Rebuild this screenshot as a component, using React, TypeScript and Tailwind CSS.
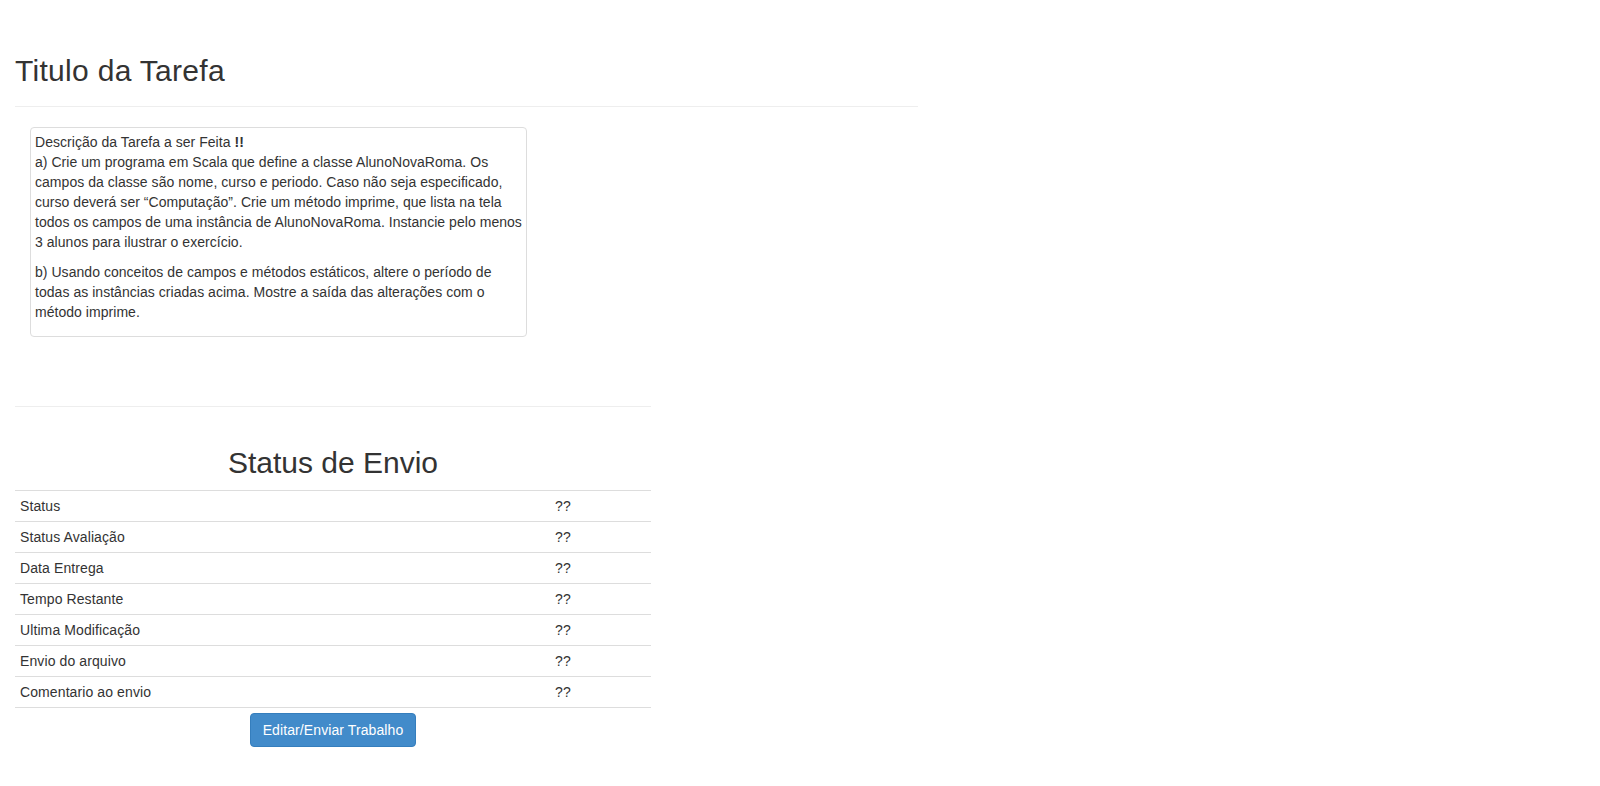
const rows = [
  "Status",
  "Status Avaliação",
  "Data Entrega",
  "Tempo Restante",
  "Ultima Modificação",
  "Envio do arquivo",
  "Comentario ao envio",
];

export default function App() {
  return (
    <main className="min-h-screen bg-white text-[#333] text-[14px] leading-[20px] tracking-[0.1px] font-['Liberation_Sans',Arial,Helvetica,sans-serif]">
      <header className="ml-[15px] w-[903px] pt-[54px]">
        <h2 className="text-[30px] leading-[33px] font-normal tracking-[0.3px] pb-[19px] border-b border-[#eee]">
          Titulo da Tarefa
        </h2>
      </header>

      <section className="ml-[30px] mt-[20px] w-[497px] rounded-[4px] border border-[#ddd] px-[4px] py-[4px] whitespace-nowrap tracking-[0.04px]">
        <p className="mb-[10px]">
          Descrição da Tarefa a ser Feita <b>!!</b>
          <br />
          a) Crie um programa em Scala que define a classe AlunoNovaRoma. Os
          <br />
          campos da classe são nome, curso e periodo. Caso não seja especificado,
          <br />
          curso deverá ser “Computação”. Crie um método imprime, que lista na tela
          <br />
          todos os campos de uma instância de AlunoNovaRoma. Instancie pelo menos
          <br />
          3 alunos para ilustrar o exercício.
        </p>
        <p className="mb-[10px]">
          b) Usando conceitos de campos e métodos estáticos, altere o período de
          <br />
          todas as instâncias criadas acima. Mostre a saída das alterações com o
          <br />
          método imprime.
        </p>
      </section>

      <section className="ml-[15px] mt-[69px] w-[636px] border-t border-[#eee]">
        <h2 className="mt-[39px] mb-[11px] text-center text-[30px] leading-[33px] font-normal tracking-normal">
          Status de Envio
        </h2>
        <table className="w-full border-collapse">
          <tbody>
            {rows.map((label, i) => (
              <tr
                key={label}
                className={
                  i === rows.length - 1
                    ? "border-t border-b border-[#ddd]"
                    : "border-t border-[#ddd]"
                }
              >
                <td className="w-[535px] px-[5px] py-[5px] text-left">{label}</td>
                <td className="px-[5px] py-[5px] text-left">??</td>
              </tr>
            ))}
          </tbody>
        </table>
        <div className="mt-[5px] flex justify-center">
          <button className="h-[34px] rounded-[4px] border border-[#357ebd] bg-[#428bca] px-[12px] text-[14px] leading-[20px] text-white">
            Editar/Enviar Trabalho
          </button>
        </div>
      </section>
    </main>
  );
}
